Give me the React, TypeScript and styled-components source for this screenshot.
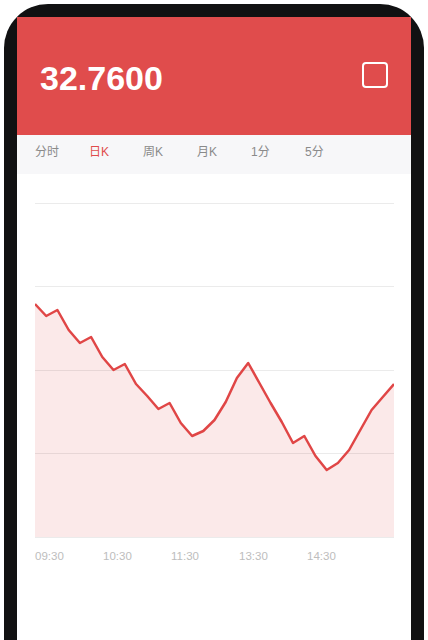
import React from 'react'
import styled, { createGlobalStyle } from 'styled-components'

const GlobalStyle = createGlobalStyle`
    html, body {
        margin: 0;
        padding: 0;
        background: #ffffff;
        overflow: hidden;
        font-family: "Liberation Sans", "Noto Sans CJK SC", sans-serif;
    }
`

type TabProps = {
    active?: boolean
}

const Frame = styled.div`
    margin: 4px 0 0 4px;
    width: 420px;
    height: 636px;
    box-sizing: border-box;
    padding: 13px 13px 0;
    background: #111112;
    border-radius: 44px 44px 0 0;
`

const Screen = styled.div`
    display: flex;
    flex-direction: column;
    height: 100%;
    background: #ffffff;
`

const Header = styled.header`
    display: flex;
    align-items: center;
    justify-content: space-between;
    height: 118px;
    padding: 0 23px;
    background: #e04c4c;
`

const Price = styled.h1`
    margin: 0;
    color: #ffffff;
    font-family: "Liberation Sans", Arial, sans-serif;
    font-size: 34px;
    font-weight: 700;
    line-height: 1;
    padding-top: 3px;
`

const SquareButton = styled.button`
    width: 26px;
    height: 26px;
    padding: 0;
    margin-bottom: 2px;
    border: 2px solid #ffffff;
    border-radius: 4px;
    background: transparent;
`

const TabBar = styled.nav`
    display: flex;
    height: 39px;
    box-sizing: border-box;
    padding: 10px 18px 14px;
    background: #f7f7f9;
`

const Tab = styled.span<TabProps>`
    width: 54px;
    font-size: 12px;
    line-height: 15px;
    color: ${({ active }) => active ? '#e04c4c' : '#8a8a8a'};
`

const ChartWrap = styled.section`
    padding: 29px 17px 0 18px;
`

const AxisRow = styled.div`
    display: flex;
    margin-top: 11px;
`

const AxisLabel = styled.span`
    width: 68px;
    font-size: 11.5px;
    line-height: 14px;
    color: #bdbdbd;
`

const tabs = ['分时', '日K', '周K', '月K', '1分', '5分']
const times = ['09:30', '10:30', '11:30', '13:30', '14:30']

const prices = [
    304, 316, 310, 330, 343, 337, 357, 370, 364, 384, 396,
    409, 403, 423, 436, 431, 420, 402, 378, 363, 383, 403,
    422, 443, 436, 456, 470, 463, 450, 430, 410, 397, 384
]

const W = 359
const H = 335
const STEP = W / (prices.length - 1)

const Chart: React.FC = () => {
    const pts = prices.map((p, i) => `${(i * STEP).toFixed(1)},${p - 203}`)
    const line = 'M' + pts.join(' L')
    const area = `${line} L${W},334 L0,334 Z`
    const grid = [0.5, 83.5, 167.5, 250.5, 334.5]
    return (
        <svg width={W} height={H} viewBox={`0 0 ${W} ${H}`} style={{ display: 'block' }}>
            <path d={area} fill="rgba(224,76,76,0.12)" />
            {grid.map((y) => (
                <line key={y} x1={0} x2={W} y1={y} y2={y} stroke="rgba(0,0,0,0.08)" strokeWidth={1} />
            ))}
            <path d={line} fill="none" stroke="#e04646" strokeWidth={2.5} strokeLinejoin="round" />
        </svg>
    )
}

const App: React.FC = () => {
    return (
        <>
            <GlobalStyle />
            <Frame>
                <Screen>
                    <Header>
                        <Price>32.7600</Price>
                        <SquareButton aria-label="menu" />
                    </Header>
                    <TabBar>
                        {tabs.map((t) => (
                            <Tab key={t} active={t === '日K'}>{t}</Tab>
                        ))}
                    </TabBar>
                    <ChartWrap>
                        <Chart />
                        <AxisRow>
                            {times.map((t) => <AxisLabel key={t}>{t}</AxisLabel>)}
                        </AxisRow>
                    </ChartWrap>
                </Screen>
            </Frame>
        </>
    )
}

export default App
